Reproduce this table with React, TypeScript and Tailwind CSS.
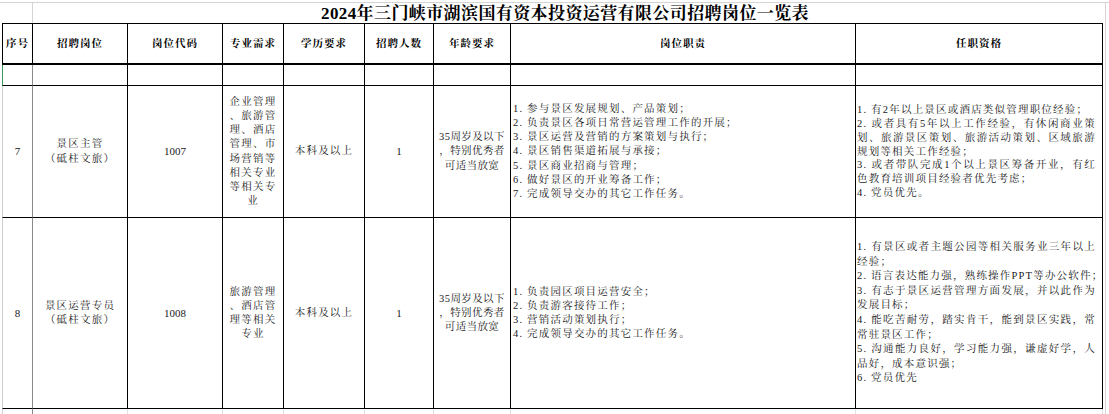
import React from "react";

const FONT = "font-['Liberation_Serif','Noto_Serif_CJK_SC','Noto_Sans_CJK_SC',serif]";
const GRID = "grid grid-cols-[31px_95px_95px_61px_81px_69px_77px_345px_247px]";
const TXT = "text-[10.5px] tracking-[1.2px] leading-[14.2px]";

const heads = ["序号", "招聘岗位", "岗位代码", "专业需求", "学历要求", "招聘人数", "年龄要求", "岗位职责", "任职资格"];

type Line = [string, boolean];

type Row = {
  no: string;
  post: string[];
  code: string;
  major: string[];
  edu: string;
  count: string;
  age: string[];
  duties: string[];
  quals: Line[];
  h: string;
  qLead: string;
};

const rows: Row[] = [
  {
    no: "7",
    post: ["景区主管", "（砥柱文旅）"],
    code: "1007",
    major: ["企业管理", "、旅游管", "理、酒店", "管理、市", "场营销等", "相关专业", "等相关专", "业"],
    edu: "本科及以上",
    count: "1",
    age: ["35周岁及以下", "，特别优秀者", "可适当放宽"],
    duties: [
      "1. 参与景区发展规划、产品策划；",
      "2. 负责景区各项日常营运管理工作的开展；",
      "3. 景区运营及营销的方案策划与执行；",
      "4. 景区销售渠道拓展与承接；",
      "5. 景区商业招商与管理；",
      "6. 做好景区的开业筹备工作；",
      "7. 完成领导交办的其它工作任务。",
    ],
    quals: [
      ["1. 有2年以上景区或酒店类似管理职位经验；", false],
      ["2. 或者具有5年以上工作经验，有休闲商业策", true],
      ["划、旅游景区策划、旅游活动策划、区域旅游", true],
      ["规划等相关工作经验；", false],
      ["3. 或者带队完成1个以上景区筹备开业，有红", true],
      ["色教育培训项目经验者优先考虑；", false],
      ["4. 党员优先。", false],
    ],
    h: "h-[132px]",
    qLead: "leading-[13.9px]",
  },
  {
    no: "8",
    post: ["景区运营专员", "（砥柱文旅）"],
    code: "1008",
    major: ["旅游管理", "、酒店管", "理等相关", "专业"],
    edu: "本科及以上",
    count: "1",
    age: ["35周岁及以下", "，特别优秀者", "可适当放宽"],
    duties: [
      "1. 负责园区项目运营安全；",
      "2. 负责游客接待工作；",
      "3. 营销活动策划执行；",
      "4. 完成领导交办的其它工作任务。",
    ],
    quals: [
      ["1. 有景区或者主题公园等相关服务业三年以上", true],
      ["经验；", false],
      ["2. 语言表达能力强，熟练操作PPT等办公软件；", false],
      ["3. 有志于景区运营管理方面发展，并以此作为", true],
      ["发展目标；", false],
      ["4. 能吃苦耐劳，踏实肯干，能到景区实践，常", true],
      ["常驻景区工作；", false],
      ["5. 沟通能力良好，学习能力强，谦虚好学，人", true],
      ["品好，成本意识强；", false],
      ["6. 党员优先", false],
    ],
    h: "h-[191px]",
    qLead: "leading-[14.6px]",
  },
];

const cell = "flex items-center border-r border-b border-black";

function DataRow({ r }: { r: Row }) {
  return (
    <div className={`${GRID} ${r.h}`}>
      <div className="flex items-center justify-center border-l border-l-[#cfcfcf] border-r border-r-[#8a8a8a] border-b border-b-black text-[11px]">
        {r.no}
      </div>
      <div className={`${cell} justify-center ${TXT} text-center`}>
        <div>
          {r.post.map((t) => (
            <div key={t} className="whitespace-nowrap">{t}</div>
          ))}
        </div>
      </div>
      <div className={`${cell} justify-center text-[11px]`}>{r.code}</div>
      <div className={`${cell} justify-center ${TXT}`}>
        <div className="text-center">
          {r.major.map((t, i) => (
            <div key={i} className="whitespace-nowrap">{t}</div>
          ))}
        </div>
      </div>
      <div className={`${cell} justify-center ${TXT}`}>{r.edu}</div>
      <div className={`${cell} justify-center text-[11px]`}>{r.count}</div>
      <div className={`${cell} justify-center text-[10.5px] tracking-[0.4px] leading-[14.2px]`}>
        <div className="text-center">
          {r.age.map((t) => (
            <div key={t} className="whitespace-nowrap">{t}</div>
          ))}
        </div>
      </div>
      <div className={`${cell} pl-[2px] ${TXT}`}>
        <div>
          {r.duties.map((t) => (
            <div key={t} className="whitespace-nowrap">{t}</div>
          ))}
        </div>
      </div>
      <div className={`${cell} pl-[1px] pr-[6px] text-[10.5px] tracking-[1.2px] ${r.qLead}`}>
        <div className="w-full">
          {r.quals.map(([t, j]) =>
            j ? (
              <div key={t} className="text-justify [text-align-last:justify]">{t}</div>
            ) : (
              <div key={t} className="whitespace-nowrap">{t}</div>
            )
          )}
        </div>
      </div>
    </div>
  );
}

export default function App() {
  return (
    <div className={`w-[1109px] h-[414px] overflow-hidden bg-white text-[#1a1a1a] ${FONT}`}>
      <div className="h-[3px] border-b border-[#d4d4d4]" />
      <div className="flex">
        <div className="w-[2px] shrink-0" />
        <div className="w-[1101px] shrink-0">
          {/* title */}
          <div className="flex h-[20px]">
            <div className="w-[31px] border-r border-[#d4d4d4]" />
            <div className="flex flex-1 items-center justify-center pr-[6px] pt-px text-[17px] font-bold leading-none tracking-[0.4px] text-black">
              2024年三门峡市湖滨国有资本投资运营有限公司招聘岗位一览表
            </div>
          </div>

          {/* header */}
          <div className={`${GRID} h-[42px]`}>
            {heads.map((h, i) => (
              <div
                key={h}
                className={`flex items-center justify-center border-t border-r border-b-2 border-black text-[10.5px] font-bold tracking-[1px] text-black ${i === 0 ? "border-l" : ""}`}
              >
                {h}
              </div>
            ))}
          </div>

          {/* selected empty row */}
          <div className={`${GRID} h-[21px]`}>
            <div className="border-l border-l-[#3a9a5c] border-r border-r-[#8a8a8a] border-b border-b-black" />
            {heads.slice(1).map((h) => (
              <div key={h} className="border-r border-b border-black" />
            ))}
          </div>

          {rows.map((r) => (
            <DataRow key={r.no} r={r} />
          ))}

          {/* next sheet row */}
          <div className={`${GRID} h-[10px]`}>
            <div className="border-l border-l-[#cfcfcf] border-r border-r-[#8a8a8a]" />
            {heads.slice(1).map((h) => (
              <div key={h} className="border-r border-[#e0e0e0]" />
            ))}
          </div>
        </div>
        <div className="w-[6px] shrink-0">
          <div className="ml-[2px] h-[420px] w-px bg-[#d4d4d4]" />
        </div>
      </div>
    </div>
  );
}
